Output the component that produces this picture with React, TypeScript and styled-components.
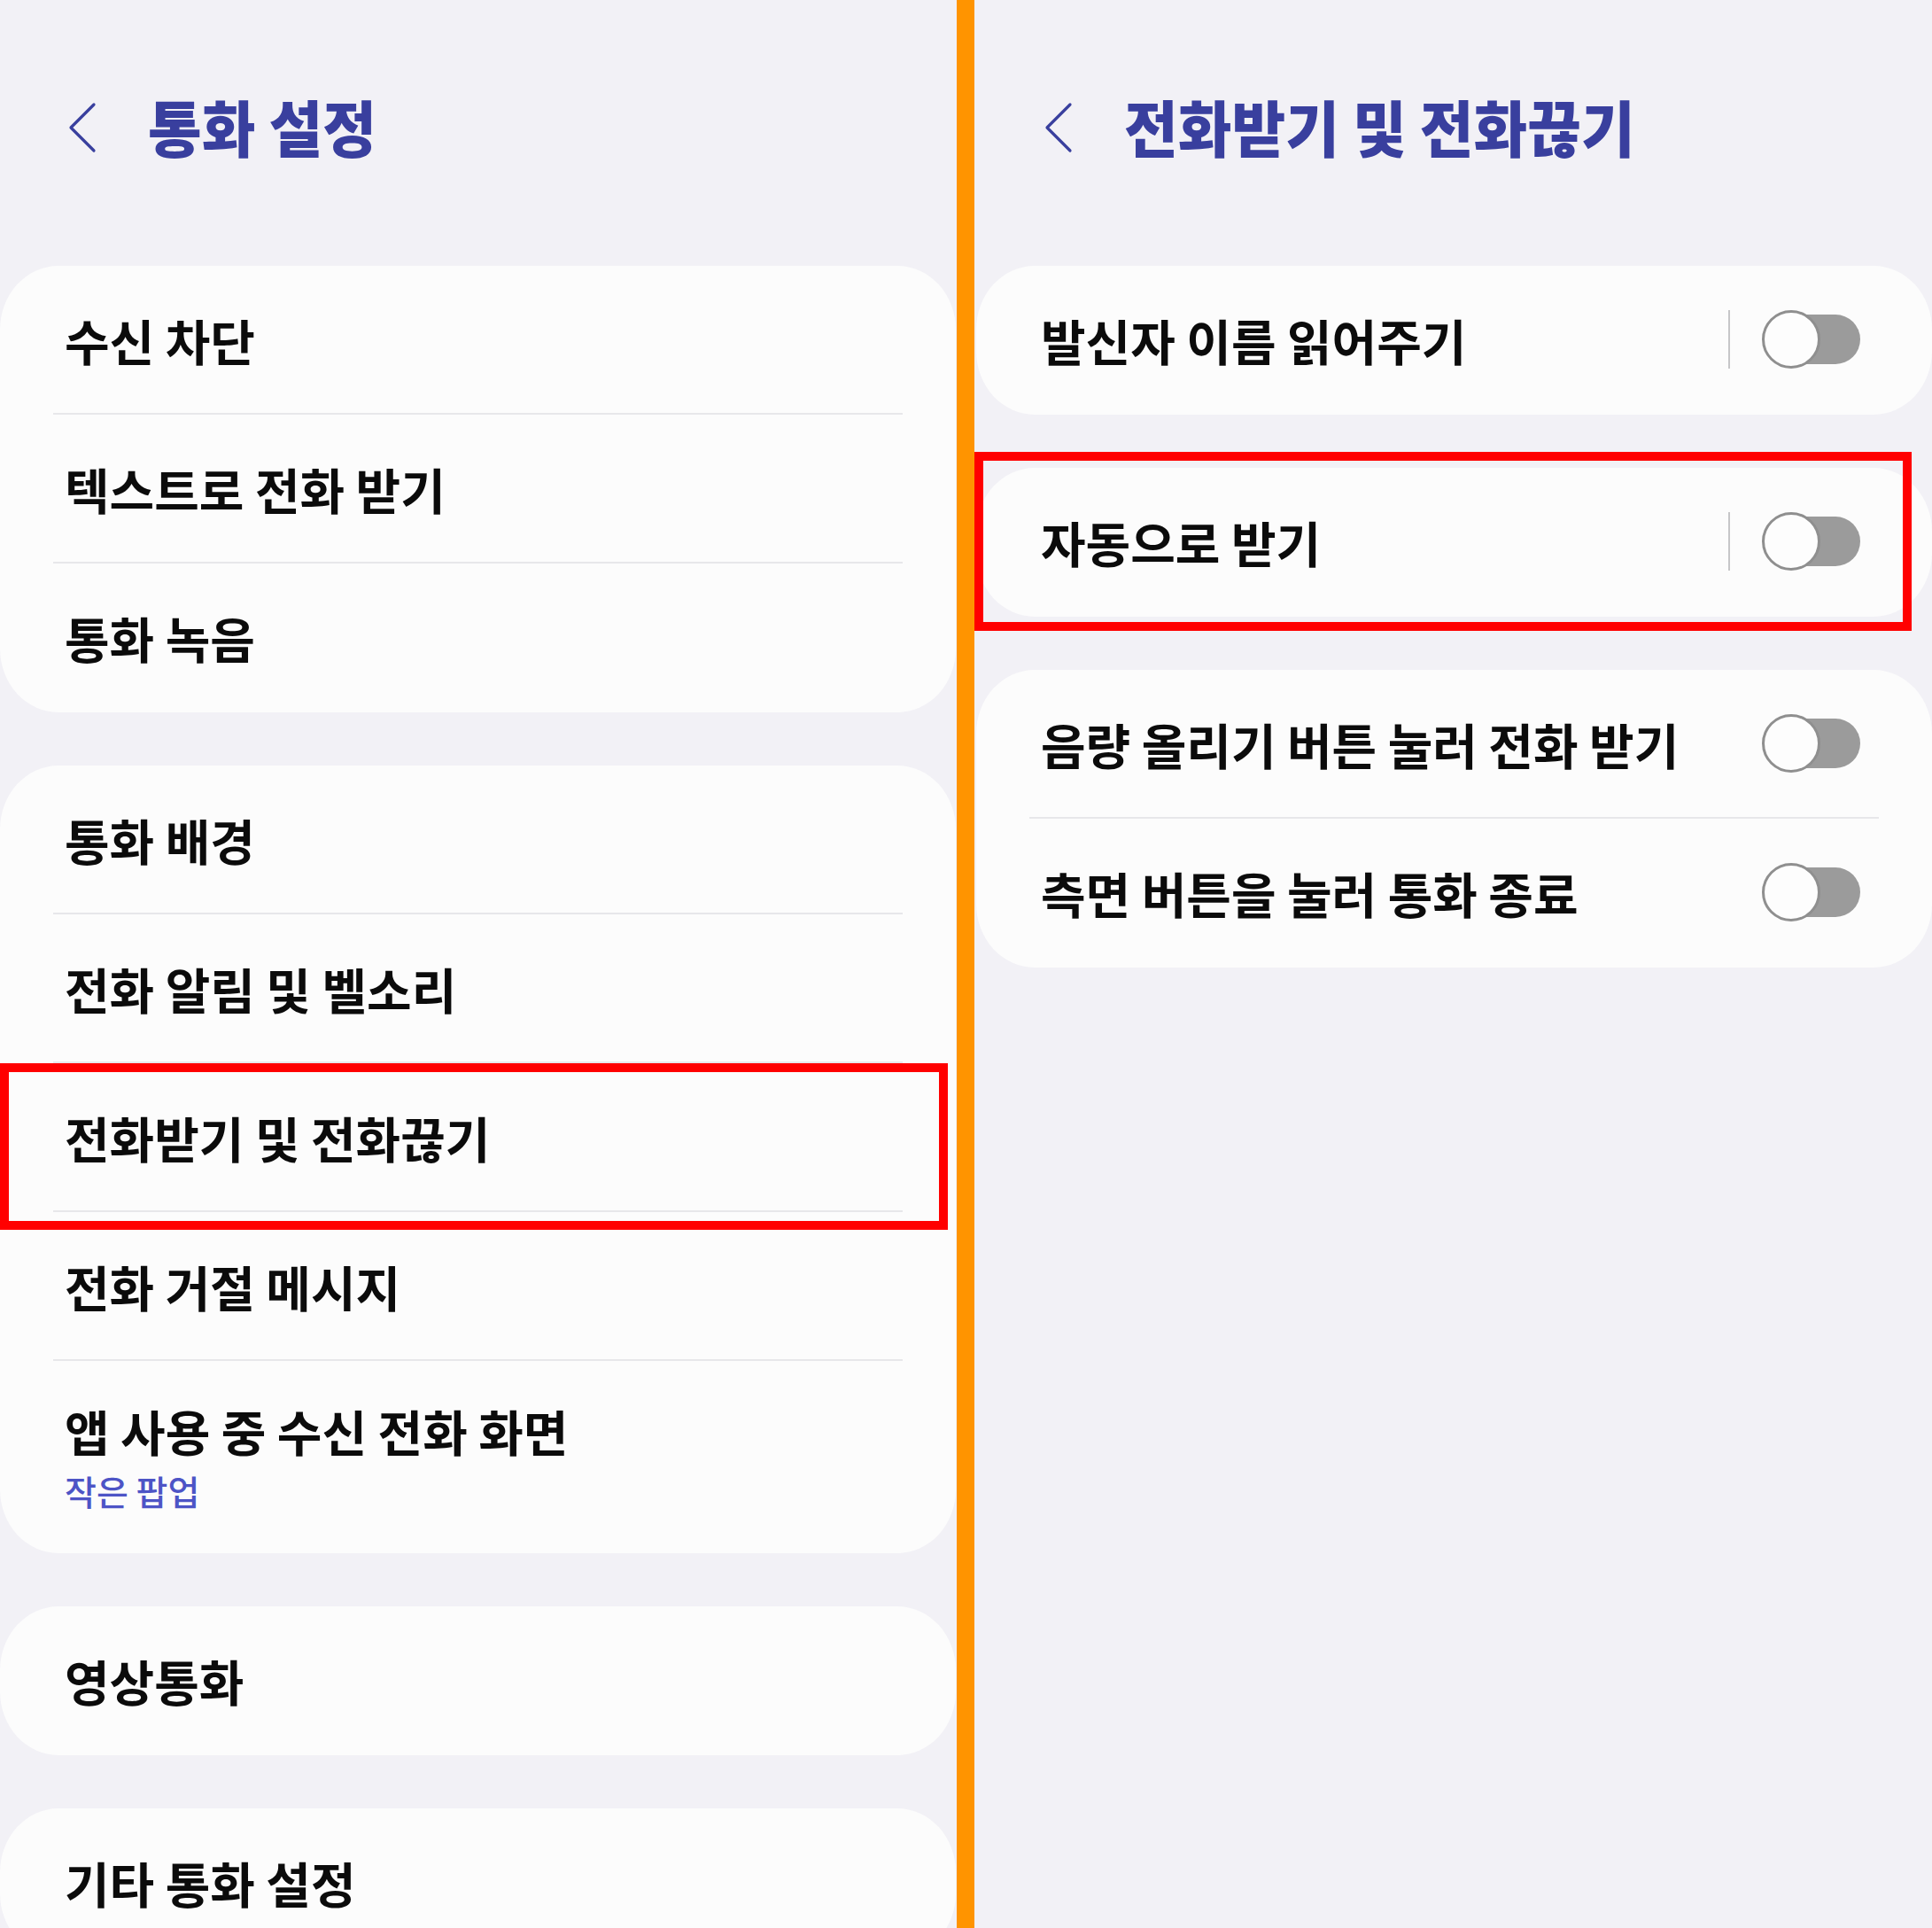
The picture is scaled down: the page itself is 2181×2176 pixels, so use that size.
import React from "react";
import styled, { createGlobalStyle } from "styled-components";

const GlobalStyle = createGlobalStyle`
  html, body { margin: 0; padding: 0; background: #f2f1f6; }
  body { font-family: "Noto Sans CJK KR", "Noto Sans", sans-serif; }
  * { box-sizing: border-box; }
`;

const Screen = styled.div`
  display: flex;
  width: 2181px;
  height: 2176px;
  overflow: hidden;
  background: #f2f1f6;
`;

const Panel = styled.section<{ $side: "left" | "right" }>`
  width: ${(p) => (p.$side === "left" ? "1080px" : "1081px")};
  flex-shrink: 0;
  padding-left: ${(p) => (p.$side === "left" ? "0" : "2px")};
  padding-right: ${(p) => (p.$side === "left" ? "1px" : "0")};
  display: flex;
  flex-direction: column;
  gap: 60px;
`;

const OrangeBar = styled.div`
  width: 20px;
  flex-shrink: 0;
  background: #ff9400;
`;

const Header = styled.header`
  height: 240px;
  flex-shrink: 0;
  padding: 102px 0 0 76px;
`;

const HeaderRow = styled.div`
  display: flex;
  align-items: center;
  height: 80px;
  gap: 57px;
`;

const BackIcon = styled.svg`
  width: 34px;
  height: 58px;
  flex-shrink: 0;
  margin-top: 4px;
`;

const Title = styled.h1`
  margin: 0;
  font-size: 66px;
  line-height: 80px;
  font-weight: 800;
  color: #393f9e;
  white-space: nowrap;
  display: inline-block;
  transform: scaleY(1.05);
`;

const Card = styled.div`
  flex-shrink: 0;
  background: #fcfcfc;
  border-radius: 66px / 72px;
  padding-bottom: 2px;
  display: flex;
  flex-direction: column;
`;

const Row = styled.div<{ $tall?: boolean }>`
  position: relative;
  height: ${(p) => (p.$tall ? "215px" : "166px")};
  display: flex;
  flex-direction: ${(p) => (p.$tall ? "column" : "row")};
  align-items: ${(p) => (p.$tall ? "flex-start" : "center")};
  padding: ${(p) => (p.$tall ? "38px 81px 0 73px" : "0 81px 0 73px")};
`;

const Label = styled.span<{ $grow?: boolean }>`
  flex: ${(p) => (p.$grow ? "1" : "none")};
  font-size: 55px;
  line-height: 80px;
  font-weight: 600;
  color: #0b0b0b;
  white-space: nowrap;
`;

const SubLabel = styled.span`
  font-size: 39px;
  line-height: 57px;
  font-weight: 500;
  color: #4d54c6;
  white-space: nowrap;
`;

const Divider = styled.div`
  height: 2px;
  margin: 0 60px;
  background: #e7e7ea;
  flex-shrink: 0;
`;

const Controls = styled.div`
  display: flex;
  align-items: center;
  gap: 36px;
  flex-shrink: 0;
`;

const VSep = styled.div<{ $visible: boolean }>`
  width: 2px;
  height: 66px;
  background: #c6c6c8;
  visibility: ${(p) => (p.$visible ? "visible" : "hidden")};
`;

const Switch = styled.div`
  position: relative;
  width: 111px;
  height: 66px;
`;

const Track = styled.div`
  position: absolute;
  right: 0;
  top: 5px;
  width: 92px;
  height: 56px;
  border-radius: 28px;
  background: #9b9b9b;
`;

const Thumb = styled.div`
  position: absolute;
  left: 0;
  top: 0;
  width: 66px;
  height: 66px;
  border-radius: 50%;
  background: #fdfdfd;
  border: 3px solid #8f8f8f;
`;

const Highlight = styled.div<{ $top: number; $left: number; $w: number; $h: number }>`
  position: absolute;
  top: ${(p) => p.$top}px;
  left: ${(p) => p.$left}px;
  width: ${(p) => p.$w}px;
  height: ${(p) => p.$h}px;
  border: 10px solid #ff0000;
  pointer-events: none;
  z-index: 2;
`;

const Back = () => (
  <BackIcon viewBox="0 0 34 58">
    <path d="M30 3 L4 29 L30 55" fill="none" stroke="#393f9e" strokeWidth="3.2" strokeLinecap="round" strokeLinejoin="round" />
  </BackIcon>
);

const PageHeader = ({ title }: { title: string }) => (
  <Header>
    <HeaderRow>
      <Back />
      <Title>{title}</Title>
    </HeaderRow>
  </Header>
);

type Item = { label: string; sub?: string; highlight?: boolean };

const MenuCard = ({ items }: { items: Item[] }) => (
  <Card>
    {items.map((it, i) => (
      <React.Fragment key={it.label}>
        {i > 0 && <Divider />}
        <Row $tall={!!it.sub}>
          <Label $grow={!it.sub}>{it.label}</Label>
          {it.sub && <SubLabel>{it.sub}</SubLabel>}
          {it.highlight && <Highlight $top={0} $left={0} $w={1070} $h={188} />}
        </Row>
      </React.Fragment>
    ))}
  </Card>
);

type Toggle = { label: string; sep?: boolean; highlight?: boolean };

const ToggleCard = ({ items }: { items: Toggle[] }) => (
  <Card>
    {items.map((it, i) => (
      <React.Fragment key={it.label}>
        {i > 0 && <Divider />}
        <Row>
          <Label $grow>{it.label}</Label>
          <Controls>
            <VSep $visible={!!it.sep} />
            <Switch>
              <Track />
              <Thumb />
            </Switch>
          </Controls>
          {it.highlight && <Highlight $top={-18} $left={-2} $w={1058} $h={202} />}
        </Row>
      </React.Fragment>
    ))}
  </Card>
);

export default function App() {
  return (
    <>
      <GlobalStyle />
      <Screen>
        <Panel $side="left">
          <PageHeader title="통화 설정" />
          <MenuCard items={[{ label: "수신 차단" }, { label: "텍스트로 전화 받기" }, { label: "통화 녹음" }]} />
          <MenuCard
            items={[
              { label: "통화 배경" },
              { label: "전화 알림 및 벨소리" },
              { label: "전화받기 및 전화끊기", highlight: true },
              { label: "전화 거절 메시지" },
              { label: "앱 사용 중 수신 전화 화면", sub: "작은 팝업" },
            ]}
          />
          <MenuCard items={[{ label: "영상통화" }]} />
          <MenuCard items={[{ label: "기타 통화 설정" }]} />
        </Panel>
        <OrangeBar />
        <Panel $side="right">
          <PageHeader title="전화받기 및 전화끊기" />
          <ToggleCard items={[{ label: "발신자 이름 읽어주기", sep: true }]} />
          <ToggleCard items={[{ label: "자동으로 받기", sep: true, highlight: true }]} />
          <ToggleCard items={[{ label: "음량 올리기 버튼 눌러 전화 받기" }, { label: "측면 버튼을 눌러 통화 종료" }]} />
        </Panel>
      </Screen>
    </>
  );
}
